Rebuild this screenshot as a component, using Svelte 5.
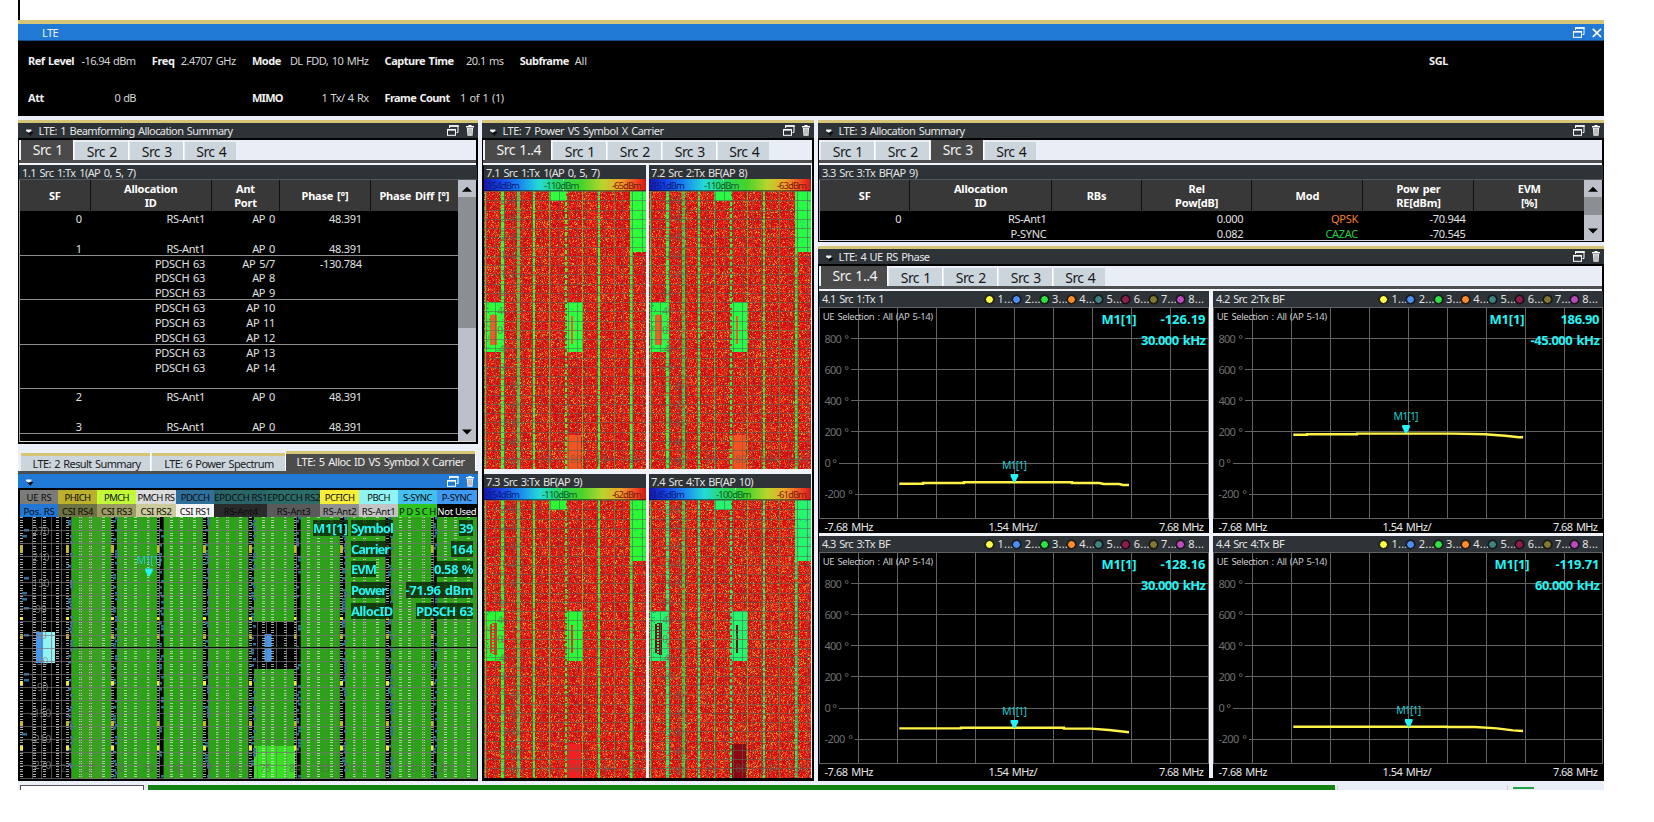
<script>
  const fit = (node, width) => {
    const n = node.textContent.length;
    const natural = node.getBoundingClientRect().width;
    node.style.letterSpacing = `${(width - natural) / n}px`;
  };

  function random(seed) {
    let s = seed;
    return () => {
      s = (s * 1664525 + 1013904223) >>> 0;
      return s / 4294967296;
    };
  }

  const legend = [
    ['UE RS', '#7b7b7b', 38], ['PHICH', '#bcb02c', 39], ['PMCH', '#c2fb36', 39], ['PMCH RS', '#dcdcdc', 40],
    ['PDCCH', '#2f6f9c', 38.3], ['EPDCCH RS1', '#2b6468', 53], ['EPDCCH RS2', '#2b6c68', 52.7],
    ['PCFICH', '#f9ee38', 39.3], ['PBCH', '#90f4f4', 38.7], ['S-SYNC', '#43c0ee', 39], ['P-SYNC', '#3f98f2', 39.7]
  ];
  const legend2 = [
    ['Pos. RS', '#2077d6'], ['CSI RS4', '#6e7140'], ['CSI RS3', '#9a9a62'], ['CSI RS2', '#cbca9a'],
    ['CSI RS1', '#f4f4f4'], ['RS-Ant4', '#2a2a2a'], ['RS-Ant3', '#5a5a5a'], ['RS-Ant2', '#909090'],
    ['RS-Ant1', '#c4c4c4'], ['P D S C H', '#2fc41e'], ['Not Used', '#000']
  ];
  const legendCols = legend.map((l) => l[2] + 'px').join(' ');
  const legendW = [25, 26, 25, 37, 29, 53, 53, 30, 23, 29, 30];
  const legendW2 = [31, 31, 31, 31, 31, 34, 34, 34, 34, 37, 39];

  function drawAlloc(canvas) {
    const c = canvas.getContext('2d');
    const W = 457, H = 262, sf = 45.7, sym = sf / 14;
    const rnd = random(7);
    const box = (x, y, w, h, f) => { c.fillStyle = f; c.fillRect(x, y, w, h); };
    box(0, 0, W, H, '#000');
    for (let i = 0; i < 10; i++) {
      const x = i * sf;
      if (i) {
        const w0 = i === 1 ? 6 : i === 3 || i === 6 ? 6.5 : 5.5;
        box(x + w0, 0, sf - w0, H, '#2ba317');
      }
      if (i === 1) box(x + 16, 0, 20, H, 'rgba(110,150,70,.22)');
      if (i === 5) {
        box(x + 5.5, 105, 41, 47, '#000');
        box(x + 5.5, 229, 41, 33, '#37df23');
        box(x + 16, 117, 7, 28, '#3f98f2');
      }
      for (const s of [0, 4, 7, 11]) {
        for (let y = 0; y < H; y += 2.62) {
          box(Math.round(x + s * sym), Math.round(y), 3, 1, i ? 'rgba(215,228,205,.72)' : 'rgba(220,220,220,.78)');
        }
      }
      for (let y = 0; y < H; y += 3) {
        if (rnd() < (i ? 0.42 : 0.16)) box(Math.round(x + (rnd() < 0.5 ? 2 : 4)), y, i ? 3 : 5, 2.5, '#326e97');
      }
      for (const [y, h] of [[28, 8], [100, 3], [117, 5], [164, 4], [204, 5], [229, 4]]) {
        box(Math.round(x), y, 3, h, h > 4 ? '#c3b62b' : '#f3ea35');
      }
    }
    box(16, 115, 7, 31, '#3f98f2');
    box(23, 115, 12, 31, '#90f4f4');
    c.fillStyle = 'rgba(122,112,122,.68)';
    for (let y = 13; y < H; y += 13.07) c.fillRect(0, Math.round(y), W, 1);
    for (let x = 11.5; x < W; x += 9.79) c.fillRect(Math.round(x), 0, 1, H);
    box(50, 130, 407, 1, '#071405');
    c.font = '10px "Noto Sans"';
    c.fillStyle = 'rgba(135,135,135,.8)';
    c.textAlign = 'center';
    [270, 210, 150, 90, 30, -30, -90, -150, -210, -270].forEach((v, i) => c.fillText(String(v), 21, 17.5 + i * 26.1));
    c.fillStyle = 'rgba(90,100,80,.65)';
    for (let k = 0; k < 14; k++) c.fillText(String(12 + 9 * k), 40.5 + 29.3 * k, 255);
  }

  const maps = [
    { title: '7.1 Src 1:Tx 1(AP 0, 5, 7)', w: 113.5, lo: '-154dBm', mid: '-110dBm', hi: '-65dBm', green: [45, 255, 58], hot: '#f05a26', end: '#f5521f', light: 0.25, mx: 60, tick: 79 },
    { title: '7.2 Src 2:Tx BF(AP 8)', w: 96, lo: '-151dBm', mid: '-110dBm', hi: '-63dBm', green: [40, 250, 70], hot: '#f05a26', end: '#f5521f', light: 0.25, mx: 55, tick: 74 },
    { title: '7.3 Src 3:Tx BF(AP 9)', w: 96, lo: '-154dBm', mid: '-110dBm', hi: '-62dBm', green: [42, 250, 52], hot: '#e8301f', end: '#fb1d1d', light: 0.2, mx: 58, tick: 77 },
    { title: '7.4 Src 4:Tx BF(AP 10)', w: 102, lo: '-145dBm', mid: '-100dBm', hi: '-61dBm', green: [38, 246, 110], hot: '#701015', end: '#8c0712', light: 0.5, mx: 67, tick: 86 }
  ];

  function drawMap(canvas, idx) {
    const m = maps[idx];
    const c = canvas.getContext('2d');
    const W = 162, H = 278;
    const img = c.createImageData(W, H);
    const rnd = random(91 + idx * 17);
    for (let y = 0; y < H; y++) {
      for (let x = 0; x < W; x++) {
        const r = rnd();
        let p;
        if (r < 0.36) p = [222, 18, 18];
        else if (r < 0.6) p = [192, 14, 20];
        else if (r < 0.76 + (0.25 - m.light) * 0.3) p = [246, 34, 22];
        else if (r < 0.91) p = [236, 76, 26];
        else if (r < 0.97) p = [232, 130, 38];
        else p = [190, 180, 52];
        img.data.set([...p, 255], (y * W + x) * 4);
      }
    }
    c.putImageData(img, 0, 0);
    const g = `rgb(${m.green})`;
    const box = (x, y, w, h, f) => { c.fillStyle = f; c.fillRect(x, y, w, h); };
    const widths = [1, 3, 3, 2, 1, 2, 1, 2, 1, 3];
    for (let i = 0; i < 10; i++) {
      const x = Math.round(0.8 + 16.13 * i);
      box(x, 0, widths[i], H, i % 2 ? g : '#45cd45');
      for (let y = 0; y < H; y += 1) {
        if (rnd() < 0.22) box(x, y, widths[i], 1, ['#7aa838', '#36d87c', '#b66a30', '#30b93b'][Math.floor(rnd() * 4)]);
      }
      if (i === 5 || (idx % 2 && i > 1)) for (let y = 3; y < H; y += 6) box(x, y, 2, 2, i === 5 ? '#8e4526' : 'rgba(80,80,30,.4)');
    }
    box(66, 0, 16, 10, g);
    box(146, 0, 16, 61, g);
    box(1, 111, 17, 50, g);
    box(83, 111, 15, 50, g);
    if (idx < 2) box(6, 124, 7, 30, m.hot);
    else {
      box(6, 124, 2, 29, m.hot);
      box(10, 123, 3, 32, m.hot);
    }
    for (let y = 123; y < 154; y += 3) box(8, y, 2, 1, idx < 2 ? '#9c8f35' : m.hot);
    box(87, 125, 2, 28, m.hot);
    box(83, 244, 14, 34, m.end);
    for (let k = 0; k < 14; k++) {
      box(147 + rnd() * 14, rnd() * 60, 1, 1, '#27a0a8');
      box(84 + rnd() * 13, 112 + rnd() * 48, 1, 1, '#31dca0');
      box(2 + rnd() * 4, 111 + rnd() * 48, 1, 1, '#1f7b58');
    }
    box(0, 139, W, 1, 'rgba(220,140,40,.55)');
    c.fillStyle = 'rgba(84,104,88,.58)';
    for (let y = 0; y < H; y += 9.25) c.fillRect(0, Math.round(y), W, 1);
    for (let x = 1.7; x < W; x += 9.17) c.fillRect(Math.round(x), 0, 1, H);
    c.font = '10px "Noto Sans"';
    c.textAlign = 'center';
    c.fillStyle = 'rgba(100,90,80,.66)';
    for (let k = 0; k < 15; k++) {
      const v = 280 - 40 * k;
      c.fillText(String(v), Math.abs(v) > 99 ? 25 : v ? 19 : 16, 12.5 + k * 18.65);
    }
    ['56', '80', '104', '128'].forEach((v, k) => c.fillText(v, 64 + 28 * k, 272));
  }

  const rows1 = [
    ['0', 'RS-Ant1', 'AP 0', '48.391'], [], ['1', 'RS-Ant1', 'AP 0', '48.391'],
    ['', 'PDSCH 63', 'AP 5/7', '-130.784'], ['', 'PDSCH 63', 'AP 8', ''], ['', 'PDSCH 63', 'AP 9', ''],
    ['', 'PDSCH 63', 'AP 10', ''], ['', 'PDSCH 63', 'AP 11', ''], ['', 'PDSCH 63', 'AP 12', ''],
    ['', 'PDSCH 63', 'AP 13', ''], ['', 'PDSCH 63', 'AP 14', ''], [],
    ['2', 'RS-Ant1', 'AP 0', '48.391'], [], ['3', 'RS-Ant1', 'AP 0', '48.391']
  ];
  const rows3 = [
    ['0', 'RS-Ant1', '', '0.000', 'QPSK', '-70.944', ''],
    ['', 'P-SYNC', '', '0.082', 'CAZAC', '-70.545', '']
  ];

  const dots = ['#ffff4a', '#4b8ff2', '#2fe244', '#ff8d2c', '#3f8282', '#8c1c4c', '#7f7732', '#b94cba'];
  const plots = [
    { t: '4.1 Src 1:Tx 1', w: 62, v: '-126.19', f: '30.000 kHz', vw: 45, fw: 65, mx: 282.5, cx: 195.4, ty: 162, d: 'M80.3 176.8H104V176H145V175.2H253V176H280L285 177H300L304 178H310' },
    { t: '4.2 Src 2:Tx BF', w: 68, v: '186.90', f: '-45.000 kHz', vw: 39, fw: 69.5, mx: 276.5, cx: 193, ty: 113, d: 'M80.3 127.8H94V127.2H144V126.6H240L272 127.2L292 128.8L306 130.2H310' },
    { t: '4.3 Src 3:Tx BF', w: 68, v: '-128.16', f: '30.000 kHz', vw: 45, fw: 65, mx: 282.5, cx: 195.4, ty: 163, d: 'M80.3 176.4H142V175.8H245V176.6H272L290 178L310 180.2' },
    { t: '4.4 Src 4:Tx BF', w: 68, v: '-119.71', f: '60.000 kHz', vw: 44, fw: 65, mx: 281.5, cx: 195.7, ty: 162, d: 'M80.3 174.7H234V175H262L284 176.4L300 178.4L310 179' }
  ];
  const yLabels = [['800 °', 24.5], ['600 °', 24.5], ['400 °', 24.5], ['200 °', 24.5], ['0 °', 12.5], ['-200 °', 28.5]];
  const readout = [['Symbol', '39', 42, 14], ['Carrier', '164', 38, 22], ['EVM', '0.58 %', 25, 39], ['Power', '-71.96 dBm', 35, 67.5], ['AllocID', 'PDSCH 63', 41.5, 57]];
</script>

{#snippet restore()}
  <svg width="12" height="11" viewBox="0 0 12 11" fill="none" stroke="#fff"><path d="M2.5 3V.5M11 0V7.5H9.5" stroke-width="1"/><path d="M2 1H11.5" stroke-width="1.8"/><rect x=".5" y="4.5" width="8" height="5.8" stroke-width="1"/><path d="M0 4.8H9" stroke-width="1.7"/></svg>
{/snippet}

{#snippet trash()}
  <svg width="8" height="11" viewBox="0 0 8 11"><path d="M2.5 0H5.5V1H8V2.5H0V1H2.5Z" fill="#fff"/><path d="M.9 3H7.1L6.6 10.8H1.4Z" fill="#eee"/><path d="M3 3.5V9.6M5 3.5V9.6" stroke="#666" stroke-width=".7"/></svg>
{/snippet}

{#snippet arrow()}
  <svg class="menu" width="8" height="7" viewBox="0 0 8 7"><path d="M1 3H7.5L4.3 6.8Z" fill="#050505"/><path d="M0 .6H5.4V2L2.8 3.8L0 2Z" fill="#f2f2f2"/></svg>
{/snippet}

{#snippet head(title, width)}
  <header class="head">
    {@render arrow()}
    <span class="t" use:fit={width}>{title}</span>
    <span class="tools">{@render restore()}{@render trash()}</span>
  </header>
{/snippet}

{#snippet tabs(items, active)}
  <nav class="tabs">
    {#each items as name, i}
      <div class="tab" class:on={i === active} class:wide={name === 'Src 1..4'}><span use:fit={name === 'Src 1..4' ? 44.5 : 30}>{name}</span></div>
    {/each}
  </nav>
{/snippet}

{#snippet scroll(size)}
  <div class="scroll">
    <svg width="18" height="17"><path d="M4 11.8L9 6.8L14 11.8Z" fill="#000"/></svg>
    <i style="height:{size}px"></i>
    <svg class="down" width="18" height="17"><path d="M4 5.5L9 10.5L14 5.5Z" fill="#000"/></svg>
  </div>
{/snippet}

<div class="page">
  <div class="above"></div>
  <div class="gold"></div>
  <div class="title"><span use:fit={16}>LTE</span><span class="tools">{@render restore()}<svg width="10" height="10" viewBox="0 0 10 10"><path d="M.8 .8L9 9M9 .8L.8 9" stroke="#fff" stroke-width="1.7"/></svg></span></div>
  <section class="info">
    <div class="grp" style="width:107.5px"><b use:fit={46}>Ref Level</b><span use:fit={54}>-16.94 dBm</span><b use:fit={16}>Att</b><span use:fit={21}>0 dB</span></div>
    <div class="grp" style="width:84px"><b use:fit={23}>Freq</b><span use:fit={55}>2.4707 GHz</span></div>
    <div class="grp" style="width:116.5px"><b use:fit={29}>Mode</b><span use:fit={78.5}>DL FDD, 10 MHz</span><b use:fit={31}>MIMO</b><span use:fit={47}>1 Tx/ 4 Rx</span></div>
    <div class="grp" style="width:119px"><b use:fit={69}>Capture Time</b><span use:fit={37.5}>20.1 ms</span><b use:fit={65}>Frame Count</b><span use:fit={43.5}>1 of 1 (1)</span></div>
    <div class="grp" style="width:67px"><b use:fit={49}>Subframe</b><span use:fit={12}>All</span></div>
    <b class="sgl" use:fit={19}>SGL</b>
  </section>

  <main>
    <div class="col">
      <section class="panel p1">
        {@render head('LTE: 1 Beamforming Allocation Summary', 194)}
        {@render tabs(['Src 1', 'Src 2', 'Src 3', 'Src 4'], 0)}
        <div class="sub"><span use:fit={113.5}>1.1 Src 1:Tx 1(AP 0, 5, 7)</span></div>
        <div class="tablewrap">
          <div class="table g1">
            <div class="th"><div>SF</div><div>Allocation<br>ID</div><div>Ant<br>Port</div><div>Phase [°]</div><div>Phase Diff [°]</div></div>
            <div class="body">
              {#each rows1 as r, i}
                <div class="tr" class:rule={i % 3 === 2}>
                  {#each [0, 1, 2, 3] as k}<span>{r[k] ?? ''}</span>{/each}
                </div>
              {/each}
            </div>
          </div>
          {@render scroll(131)}
        </div>
      </section>

      <div class="wintabs">
        <div class="wt" style="width:129px"><span use:fit={108}>LTE: 2 Result Summary</span></div>
        <div class="wt" style="width:133px"><span use:fit={109.5}>LTE: 6 Power Spectrum</span></div>
        <div class="wt on" style="width:189px"><span use:fit={168}>LTE: 5 Alloc ID VS Symbol X Carrier</span></div>
      </div>
      <section class="p5">
        <header class="head blue">{@render arrow()}<span class="tools">{@render restore()}{@render trash()}</span></header>
        <div class="legend" style="grid-template-columns:{legendCols}">
          {#each legend as l, i}<div style="background:{l[1]}"><span use:fit={legendW[i]}>{l[0]}</span></div>{/each}
          {#each legend2 as l, i}<div style="background:{l[1]}" class:inv={i === 10}><span use:fit={legendW2[i]}>{l[0]}</span></div>{/each}
        </div>
        <div class="alloc">
          <canvas width="457" height="262" use:drawAlloc></canvas>
          <svg class="over" width="457" height="262">
            <text x="116.5" y="47" textLength="25" class="mk">M1[1]</text>
            <path d="M125.3 51.5H132.7V54L129 60L125.3 54Z" fill="#25f4f4"/>
          </svg>
          <div class="readout">
            <b class="m"><span use:fit={34.5}>M1[1]</span></b>
            {#each readout as r}
              <b class="k"><span use:fit={r[2]}>{r[0]}</span></b><b class="v"><span use:fit={r[3]}>{r[1]}</span></b>
            {/each}
          </div>
        </div>
      </section>
    </div>

    <section class="panel p7">
      {@render head('LTE: 7 Power VS Symbol X Carrier', 161)}
      {@render tabs(['Src 1..4', 'Src 1', 'Src 2', 'Src 3', 'Src 4'], 0)}
      <div class="maps">
        {#each maps as m, i}
          <div class="map">
            <div class="sub"><span use:fit={m.w}>{m.title}</span></div>
            <svg class="bar" width="162" height="12">
              <defs><linearGradient id="heat{i}"><stop offset="0" stop-color="#1515a8"/><stop offset=".1" stop-color="#1740e8"/><stop offset=".22" stop-color="#1a86ee"/><stop offset=".34" stop-color="#25d9d8"/><stop offset=".46" stop-color="#27d765"/><stop offset=".6" stop-color="#45d32a"/><stop offset=".73" stop-color="#b9d42e"/><stop offset=".84" stop-color="#f0a32a"/><stop offset=".96" stop-color="#ed3421"/><stop offset="1" stop-color="#c81b14"/></linearGradient></defs>
              <rect width="162" height="11.5" fill="url(#heat{i})"/>
              <path d="M{m.tick + .5} 0V2M{m.tick + .5} 10V11.5" stroke="#bfeec0"/>
              <text x="1" y="9.5" textLength="35" fill="#071a78">{m.lo}</text>
              <text x={m.mx} y="9.5" textLength="35.5" fill="#0b5b26">{m.mid}</text>
              <text x="128" y="9.5" textLength="30" fill="#7c1a0c">{m.hi}</text>
            </svg>
            <canvas width="162" height="278" use:drawMap={i}></canvas>
          </div>
        {/each}
      </div>
    </section>

    <div class="col">
      <section class="panel p3">
        {@render head('LTE: 3 Allocation Summary', 126)}
        {@render tabs(['Src 1', 'Src 2', 'Src 3', 'Src 4'], 2)}
        <div class="sub"><span use:fit={95.5}>3.3 Src 3:Tx BF(AP 9)</span></div>
        <div class="tablewrap">
          <div class="table g3">
            <div class="th"><div>SF</div><div>Allocation<br>ID</div><div>RBs</div><div>Rel<br>Pow[dB]</div><div>Mod</div><div>Pow per<br>RE[dBm]</div><div>EVM<br>[%]</div></div>
            <div class="body">
              {#each rows3 as r}
                <div class="tr">{#each r as v}<span class:qpsk={v === 'QPSK'} class:cazac={v === 'CAZAC'}>{v}</span>{/each}</div>
              {/each}
            </div>
          </div>
          {@render scroll(18)}
        </div>
      </section>

      <section class="panel p4">
        {@render head('LTE: 4 UE RS Phase', 91)}
        {@render tabs(['Src 1..4', 'Src 1', 'Src 2', 'Src 3', 'Src 4'], 0)}
        <div class="plots">
          {#each plots as p}
            <div class="plot">
              <div class="sub">
                <span use:fit={p.w}>{p.t}</span>
                <div class="dots">{#each dots as d, i}<div><i style="background:{d}"></i>{i + 1}...</div>{/each}</div>
              </div>
              <svg width="390" height="226" viewBox="0 0 390 226">
                <g stroke="#626262" shape-rendering="crispEdges">
                  {#each [1, 2, 3, 4, 5, 6, 7, 8, 9] as k}<path d="M{39 * k + .5} 0V212"/>{/each}
                  <path d="M.5 0V212M389.5 0V212M0 211.5H390M0 .5H390"/>
                  {#each yLabels as l, i}<path d="M{l[1] + 7} {Math.round(31.1 * (i + 1)) + .5}H390"/>{/each}
                </g>
                {#each yLabels as l, i}
                  <text class="yl" x="5.5" y={35.6 + 31.07 * i} textLength={l[1]}>{l[0]}</text>
                {/each}
                <text class="ue" x="3.7" y="12.5" textLength="110.5">UE Selection : All (AP 5-14)</text>
                <path d={p.d} stroke="#fff34a" stroke-width="2.4" fill="none"/>
                <text class="mk" x={p.cx - 12.5} y={p.ty} textLength="25">M1[1]</text>
                <path d="M{p.cx - 3.8} {p.ty + 5}h7.6v2.2l-2.8 5.8h-2l-2.8 -5.8z" fill="#25f4f4"/>
                <text class="rd" x={p.mx} y="16.5" textLength="35">M1[1]</text>
                <text class="rd" x={386.5 - p.vw} y="16.5" textLength={p.vw}>{p.v}</text>
                <text class="rd" x={387 - p.fw} y="37.5" textLength={p.fw}>{p.f}</text>
                <text class="ax" x="5.5" y="224" textLength="49">-7.68 MHz</text>
                <text class="ax" x="169.5" y="224" textLength="49">1.54 MHz/</text>
                <text class="ax" x="340" y="224" textLength="45">7.68 MHz</text>
              </svg>
            </div>
          {/each}
        </div>
      </section>
    </div>
  </main>

  <footer><div class="field"></div><div class="progress"></div><div class="cell"></div><div class="cell last"><i></i></div></footer>
</div>

<style>
  :global(body) { background: #fff; }
  .page { box-sizing: border-box; width: 1654px; height: 822px; overflow: hidden; padding: 0 50px 0 18px; font: 11px/14px "Noto Sans", "Open Sans", sans-serif; word-spacing: 1.2px; color: #f0f0f0; white-space: nowrap; }
  .page span { display: inline-block; }
  svg, canvas { display: block; }
  .above { height: 20px; border-left: 2px solid #000; }
  .gold { height: 4px; background: #d4c676; }
  .title { height: 17px; box-sizing: border-box; background: #2179d6; border-bottom: 1px solid #174f8a; display: flex; align-items: center; padding: 1px 2.5px 0 24px; }
  .tools { margin-left: auto; display: flex !important; align-items: center; gap: 7px; }
  .info { height: 75px; background: #000; display: flex; gap: 16.2px; padding-left: 10px; }
  .grp { display: grid; grid-template-columns: auto auto; grid-template-rows: 37px 37px; justify-content: space-between; align-items: center; padding-top: 1px; box-sizing: border-box; height: 75px; }
  .grp span { justify-self: end; color: #d6d6d6; }
  .grp b { justify-self: start; }
  .sgl { margin: 13px 156px 0 auto; }
  main { background: #ebeff7; display: grid; grid-template-columns: 460px 332px 786px; gap: 4px; padding: 4px 0; height: 661px; }
  .col { display: flex; flex-direction: column; min-width: 0; }
  .panel { background: #000; border-top: 3px solid #d4c676; box-sizing: border-box; }
  .head { height: 15px; background: #2d3336; display: flex; align-items: center; padding: 0 4px 0 8px; }
  .head .t { margin-left: 4.5px; color: #e6e6e6; }
  .menu { margin-top: 3px; }
  .tabs { height: 20px; margin: 2px 2px 0 1px; padding-left: 2px; background: #e9edf5; border-bottom: 3px solid #4c4e50; box-shadow: 0 2px 0 #f4f6fa; display: flex; gap: 2px; }
  .tab { box-sizing: border-box; width: 53px; height: 19px; margin-top: 1px; background: #cdd5dc; color: #16181a; font-size: 14px; line-height: 19px; text-align: center; border-top: 1px solid #e9edf5; box-shadow: 1px 0 0 #fff; padding-left: .5px; }
  .tab.on { background: #4a4a4a; color: #f2f2f2; margin-top: 0; height: 20px; line-height: 19px; border-top: 0; width: 52px; padding-left: 1.5px; }
  .tab.wide { width: 66px; }
  .tab:last-child { width: 51px; box-shadow: none; padding-left: 1.5px; }
  .sub { box-sizing: border-box; height: 15px; margin: 2px 1px 0; background: #2d3336; border-bottom: 1px solid #55585a; line-height: 15px; color: #e4e4e4; padding-left: 3px; display: flex; }
  .tablewrap { display: flex; margin: 0 2px 0 1px; border-bottom: 1px solid #d8d8d8; border-left: 1px solid #999; }
  .table { flex: 1; }
  .th, .tr { display: grid; }
  .g1 .th, .g1 .tr { grid-template-columns: 70.7px 121px 68.6px 90.4px 1fr; }
  .g3 .th, .g3 .tr { grid-template-columns: 90.3px 141.7px 90px 110.3px 111.2px 111px 1fr; }
  .th { height: 31px; background: #383838; font-weight: 700; align-items: stretch; text-align: center; line-height: 14px; letter-spacing: -.2px; color: #fff; }
  .th div { display: flex; align-items: center; justify-content: center; border-right: 1px solid #111; }
  .th div:last-child { border-right: 0; }
  .tr { height: 14.87px; box-sizing: border-box; line-height: 15px; color: #e0e0e0; letter-spacing: -.3px; }
  .tr span { text-align: right; padding-right: 9px; }
  .g1 .tr span:nth-child(2) { padding-right: 6.7px; }
  .g1 .tr span:nth-child(3) { padding-right: 5.3px; }
  .g3 .tr span:nth-child(2), .g3 .tr span:nth-child(5) { padding-right: 5.5px; }
  .rule { border-bottom: 1px solid #8f8f8f; }
  .qpsk { color: #f5842a; }
  .cazac { color: #22cf3c; }
  .scroll { width: 18px; background: #bcc1c9; display: flex; flex-direction: column; }
  .scroll i { background: #8b8f94; }
  .scroll .down { margin-top: auto; }
  .p1 { height: 324px; }
  .p1 .tablewrap { height: 261px; }
  .p3 { height: 122px; }
  .p3 .tablewrap { height: 60px; }
  .wintabs { height: 20px; margin-top: 7px; padding-left: 3px; display: flex; align-items: flex-end; gap: 1.5px; border-bottom: 3px solid #4c4e50; }
  .wt { box-sizing: border-box; height: 18px; border-top: 3px solid #d4c676; background: #cdd5dc; color: #1a1c1e; text-align: center; line-height: 15px; box-shadow: 1px 0 0 #fff; padding-left: 2px; }
  .wt.on { height: 20px; background: #4c4c4c; color: #f2f2f2; padding-left: 0; }
  .p5 { background: #000; height: 307px; }
  .head.blue { height: 14px; background: #2179d6; }
  .legend { display: grid; grid-template-rows: 13.5px 13.5px; margin: 2px 0 0 2px; width: 457px; font-size: 9.5px; line-height: 15px; color: #0b0b0b; text-align: center; word-spacing: 0; }
  .legend .inv { color: #fff; }
  .alloc { position: relative; margin-left: 2px; width: 457px; }
  .over { position: absolute; left: 0; top: 0; }
  .readout { position: absolute; right: 4px; top: 3px; display: grid; grid-template-columns: 36px 42px 78px; column-gap: 2px; row-gap: 4.7px; font-size: 13px; line-height: 16px; color: #25f4f4; }
  .readout span { background: rgba(0, 20, 0, .7); }
  .readout .m { grid-column: 1; }
  .readout .k { grid-column: 2; }
  .readout .v { grid-column: 3; text-align: right; }
  .readout b { height: 16px; }
  .maps { display: grid; grid-template-columns: 162px 162px; column-gap: 3px; row-gap: 5px; margin: 2px 2px 0; padding-right: 1px; background: #f0f3f9; width: 327px; }
  .map .sub { margin: 0; height: 14px; border: 0; padding-left: 2px; }
  .map { background: #000; }
  .bar { font-size: 9.5px; background: #000; }
  .plots { display: grid; grid-template-columns: 390px 390px; column-gap: 4px; row-gap: 3px; margin: 2px 1px 0; background: #f0f3f9; }
  .plot { background: #000; }
  .plot .sub { margin: 0; height: 16px; border: 0; line-height: 16px; }
  .p4 { margin-top: 4px; flex: 1; }
  .dots { margin: 0 6px 0 auto; display: flex; letter-spacing: .2px; }
  .dots div { width: 27.25px; display: flex; align-items: center; }
  .dots i { flex: none; width: 7px; height: 7px; border-radius: 50%; border: 1px solid #0c0c0c; margin-right: 3.5px; box-shadow: 0 0 0 .5px #111; }
  .plots text { word-spacing: 1.2px; }
  .yl { font-size: 11px; fill: #6f6f6f; }
  .ue { font-size: 9.5px; fill: #c9c9c9; }
  .mk { font-size: 10.5px; fill: #22c9c9; }
  .rd { font-size: 13px; font-weight: 700; fill: #25f4f4; }
  .ax { font-size: 11px; fill: #e6e6e6; }
  footer { height: 5px; background: #e9edf5; display: flex; }
  .field { box-sizing: border-box; width: 124px; margin-left: 2px; background: #fff; border: 1px solid #555; border-bottom: 0; }
  .progress { width: 1187px; margin-left: 4.5px; background: #118213; }
  .cell { width: 170px; margin-left: 2px; border-left: 1px solid #cdd2da; box-sizing: border-box; }
  .cell.last { margin-left: 0; width: 97px; padding: 2px 0 0 5px; }
  .cell i { display: block; width: 21px; height: 2px; background: #25a148; }
</style>
